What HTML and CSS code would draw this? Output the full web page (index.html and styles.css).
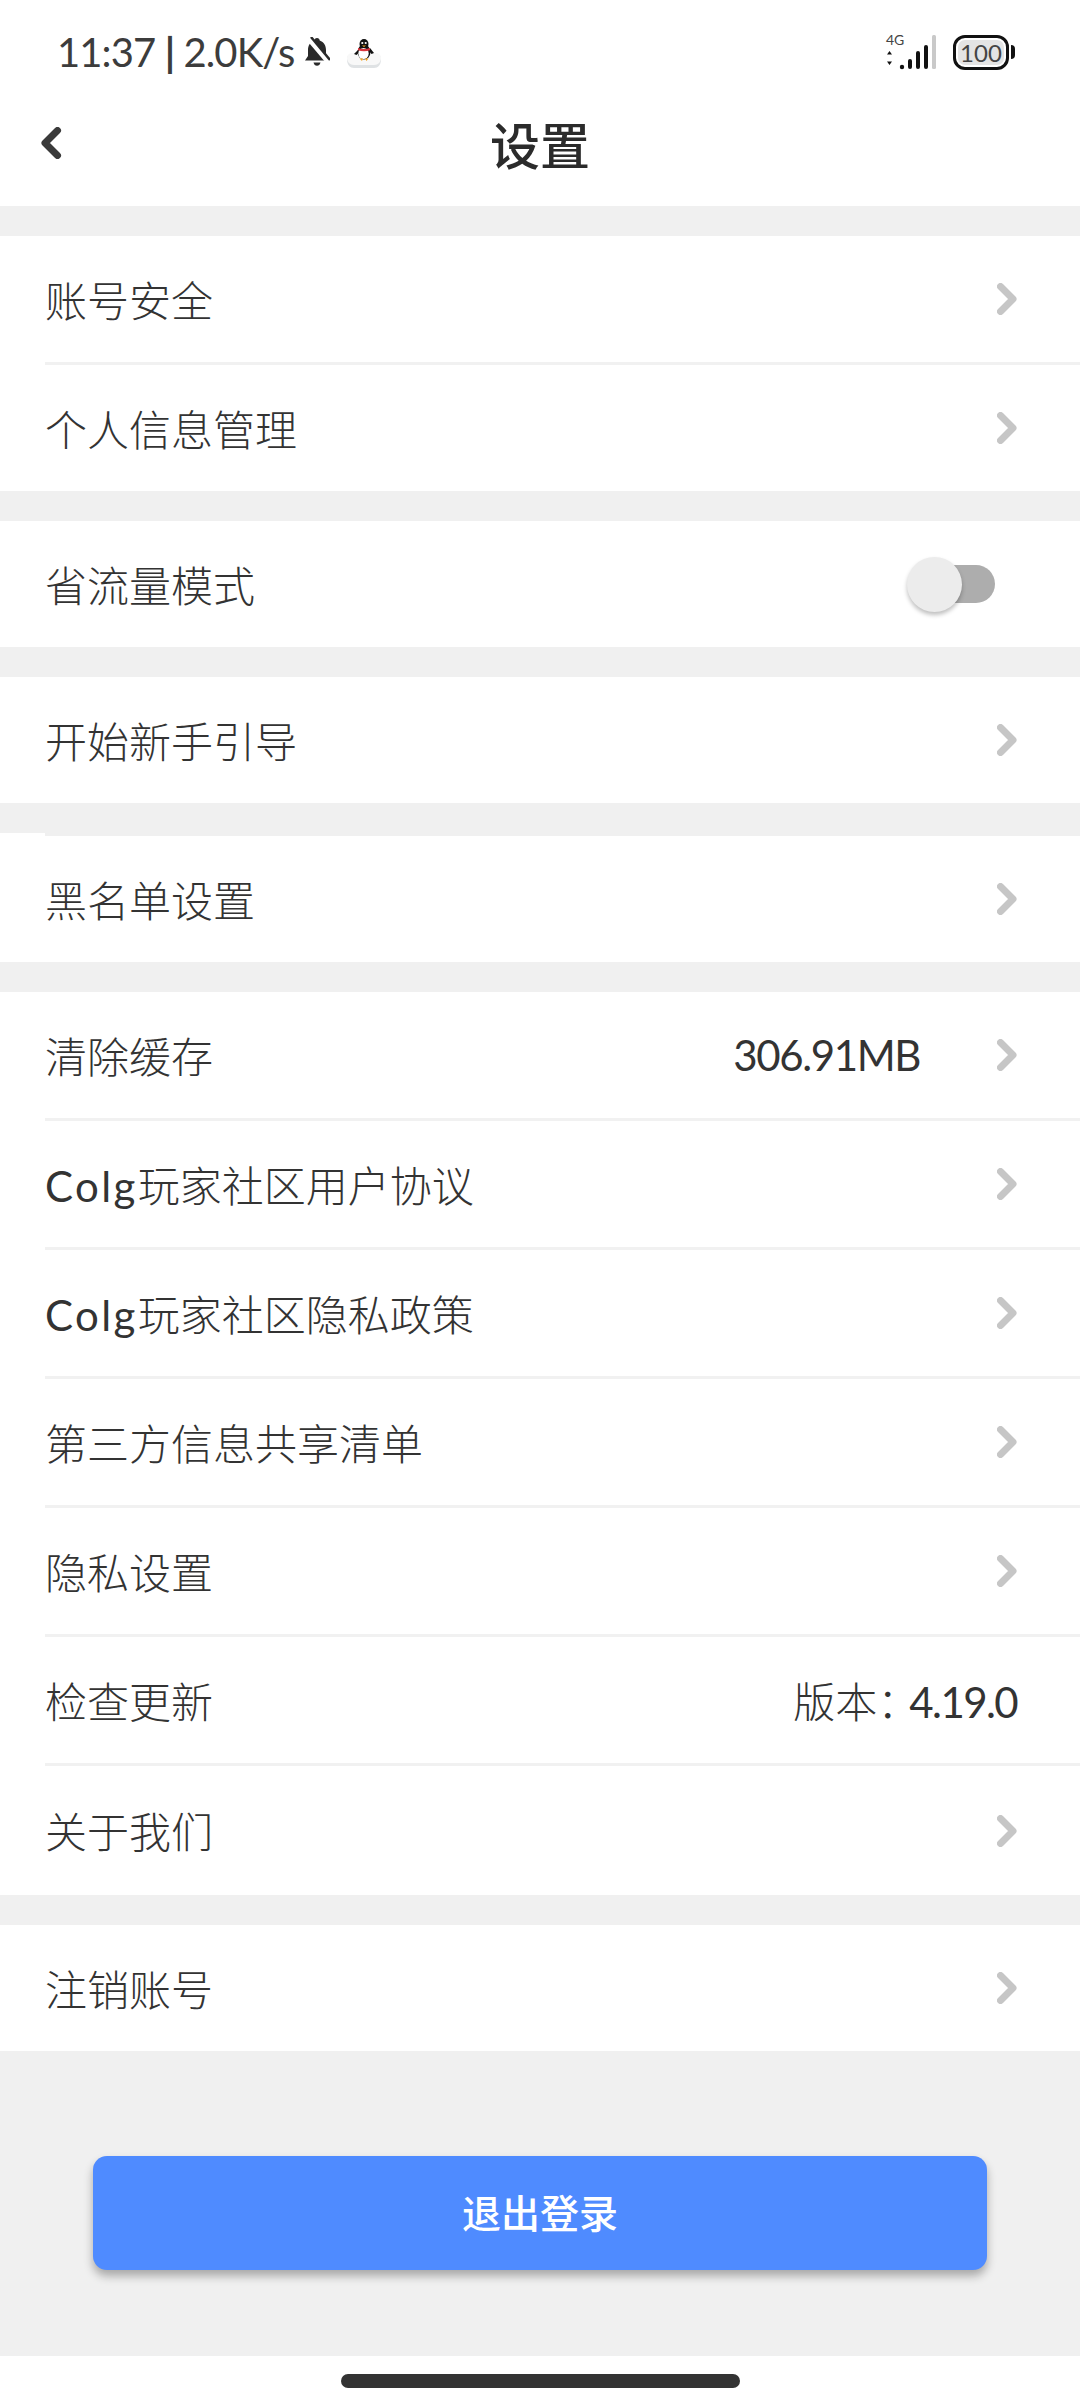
FILE: index.html
```html
<!DOCTYPE html>
<html lang="zh-CN">
<head>
  <meta charset="UTF-8" />
  <meta name="viewport" content="width=device-width, initial-scale=1.0"/>
  <title>设置</title>
  <link rel="stylesheet" href="styles.css">
</head>
<body>
  <svg class="defs" width="0" height="0">
    <symbol id="chevron" viewBox="0 0 20 32">
      <path d="M3.5 3.5 L16 16 L3.5 28.5" fill="none" stroke="#c6c6c6" stroke-width="7" stroke-linecap="round" stroke-linejoin="round"/>
    </symbol>
  </svg>

  <header class="header">
    <div class="status">
      <div class="status-left">
        <span class="status-text">11:37 <b class="status-pipe">|</b> 2.0K/s</span>
        <svg class="bell" viewBox="0 0 26 30">
          <path d="M13 1c1.600 0 2.600 1 2.700 2.400C20 4.800 22 8.500 22 13v6l3 4.500H1L4 19v-6c0-4.500 2-8.200 6.300-9.600C10.400 2 11.400 1 13 1z" fill="#2a2a2a"/>
          <path d="M9.500 25.500h7c-.4 2-1.800 3.300-3.500 3.300s-3.100-1.300-3.500-3.300z" fill="#2a2a2a"/>
          <path d="M4 1 L26 27" stroke="#fff" stroke-width="5"/>
          <path d="M7 0 L26 23" stroke="#2a2a2a" stroke-width="2.500"/>
        </svg>
        <svg class="qq" viewBox="0 0 34 30">
          <path d="M0 20c0-3 2-5 6-5h22c4 0 6 2 6 5 0 6-3 9-7 9H7c-4 0-7-3-7-9z" fill="#dfe2e4"/>
          <path d="M0 19c0-3 2-5 6-5h22c4 0 6 2 6 5 0 4-3 7-7 7H7c-4 0-7-3-7-7z" fill="#f8f8f8"/>
          <path d="M11 11 L7 15 L9.500 16 L12 13.500z" fill="#111"/>
          <path d="M23 9 L27 14 L24.500 15 L22 12z" fill="#111"/>
          <ellipse cx="17" cy="5" rx="4.500" ry="5" fill="#111"/>
          <ellipse cx="17" cy="13" rx="6.500" ry="7.500" fill="#111"/>
          <ellipse cx="16.500" cy="14.500" rx="5.200" ry="5.500" fill="#fff"/>
          <circle cx="15.300" cy="4" r="1.100" fill="#fff"/>
          <circle cx="18.700" cy="4" r="1.100" fill="#fff"/>
          <path d="M15 6.500h4l-2 1.600z" fill="#f5a623"/>
          <path d="M11 9c3.500 1.400 8.500 1.400 12 0v2.300c-3.500 1.400-8.500 1.400-12 0z" fill="#d9363e"/>
          <path d="M12.500 19.500h3.500l-1 2.500z M18 19.500h3.500l-2 2.500z" fill="#f5a623"/>
        </svg>
      </div>
      <div class="status-right">
        <svg class="signal" viewBox="0 0 52 36">
          <text class="signal-label" x="0" y="11">4G</text>
          <path d="M3.500 17 L6 20.500 H1 Z M1 27.500 H6 L3.500 31 Z" fill="#111"/>
          <circle cx="16" cy="33" r="2.200" fill="#111"/>
          <rect x="22" y="25" width="4" height="10" rx="2" fill="#111"/>
          <rect x="30" y="17" width="4" height="18" rx="2" fill="#111"/>
          <rect x="38" y="11" width="4" height="24" rx="2" fill="#111"/>
          <rect x="46" y="1" width="4" height="34" rx="1.500" fill="#c9c9c9"/>
        </svg>
        <div class="battery">
          <div class="battery-body"><span class="battery-level">100</span></div>
          <div class="battery-cap"></div>
        </div>
      </div>
    </div>
    <div class="nav">
      <svg class="back" viewBox="0 0 22 32">
        <path d="M17.500 3.500 L5 16 L17.500 28.500" fill="none" stroke="#3a3a3a" stroke-width="7" stroke-linecap="round" stroke-linejoin="round"/>
      </svg>
      <h1 class="title">设置</h1>
    </div>
  </header>

  <section class="group">
    <div class="row"><div class="row-body line">
      <span class="row-label">账号安全</span>
      <svg class="chevron"><use href="#chevron"/></svg>
    </div></div>
    <div class="row"><div class="row-body">
      <span class="row-label">个人信息管理</span>
      <svg class="chevron"><use href="#chevron"/></svg>
    </div></div>
  </section>

  <section class="group">
    <div class="row"><div class="row-body">
      <span class="row-label">省流量模式</span>
      <div class="toggle"><div class="toggle-thumb"></div></div>
    </div></div>
  </section>

  <section class="group">
    <div class="row"><div class="row-body">
      <span class="row-label">开始新手引导</span>
      <svg class="chevron"><use href="#chevron"/></svg>
    </div></div>
  </section>

  <section class="group group-notched">
    <div class="row"><div class="row-body">
      <span class="row-label">黑名单设置</span>
      <svg class="chevron"><use href="#chevron"/></svg>
    </div></div>
  </section>

  <section class="group">
    <div class="row"><div class="row-body line">
      <span class="row-label">清除缓存</span>
      <span class="row-value">306.91MB</span>
      <svg class="chevron"><use href="#chevron"/></svg>
    </div></div>
    <div class="row"><div class="row-body line">
      <span class="row-label"><span class="latin">Colg</span>玩家社区用户协议</span>
      <svg class="chevron"><use href="#chevron"/></svg>
    </div></div>
    <div class="row"><div class="row-body line">
      <span class="row-label"><span class="latin">Colg</span>玩家社区隐私政策</span>
      <svg class="chevron"><use href="#chevron"/></svg>
    </div></div>
    <div class="row"><div class="row-body line">
      <span class="row-label">第三方信息共享清单</span>
      <svg class="chevron"><use href="#chevron"/></svg>
    </div></div>
    <div class="row"><div class="row-body line">
      <span class="row-label">隐私设置</span>
      <svg class="chevron"><use href="#chevron"/></svg>
    </div></div>
    <div class="row"><div class="row-body line">
      <span class="row-label">检查更新</span>
      <span class="row-version">版本<span class="version-colon">：</span><span class="version-num">4.19.0</span></span>
    </div></div>
    <div class="row"><div class="row-body row-tall">
      <span class="row-label">关于我们</span>
      <svg class="chevron"><use href="#chevron"/></svg>
    </div></div>
  </section>

  <section class="group">
    <div class="row"><div class="row-body">
      <span class="row-label">注销账号</span>
      <svg class="chevron"><use href="#chevron"/></svg>
    </div></div>
  </section>

  <div class="logout-area">
    <button class="logout">退出登录</button>
  </div>

  <footer class="home-area">
    <div class="home-bar"></div>
  </footer>
</body>
</html>
```

FILE: styles.css
```css
* {
  box-sizing: border-box;
}

body {
  margin: 0;
  width: 1080px;
  height: 2400px;
  background: #f0f0f0;
  color: #333;
  font-family: "Lato", "Noto Sans CJK SC", sans-serif;
  display: flex;
  flex-direction: column;
  overflow: hidden;
}

.defs {
  position: absolute;
}

.header {
  height: 206px;
  background: #fff;
  padding-top: 8px;
}

.status {
  height: 88px;
  padding: 0 65px 0 57px;
  display: flex;
  align-items: center;
  justify-content: space-between;
}

.status-left {
  display: flex;
  align-items: center;
}

.status-text {
  font-size: 40px;
  letter-spacing: -0.9px;
  color: #3c3c3c;
  white-space: nowrap;
}

.status-pipe {
  font-weight: 700;
}

.bell {
  width: 26px;
  height: 30px;
  margin-left: 10px;
}

.qq {
  width: 34px;
  height: 30px;
  margin-left: 17px;
  margin-top: 3px;
}

.status-right {
  display: flex;
  align-items: center;
}

.signal {
  width: 52px;
  height: 36px;
  overflow: visible;
}

.signal-label {
  font-size: 14px;
  fill: #444;
}

.battery {
  display: flex;
  align-items: center;
  margin-left: 15px;
}

.battery-body {
  width: 56px;
  height: 35px;
  border: 3px solid #111;
  border-radius: 12px;
  padding: 2px;
}

.battery-level {
  display: block;
  height: 100%;
  background: #e4e4e4;
  border-radius: 7px;
  font-size: 24px;
  line-height: 25px;
  text-align: center;
  color: #444;
}

.battery-cap {
  width: 4px;
  height: 14px;
  margin-left: 2px;
  background: #111;
  border-radius: 0 4px 4px 0;
}

.nav {
  height: 96px;
  padding-left: 40px;
  padding-bottom: 2px;
  display: flex;
  align-items: center;
  position: relative;
}

.back {
  width: 22px;
  height: 32px;
}

.title {
  position: absolute;
  left: 0;
  right: 0;
  margin: 0;
  text-align: center;
  font-size: 50px;
  font-weight: 500;
  color: #2b2b2b;
}

.group {
  margin-top: 30px;
  background: #fff;
}

.group-notched {
  margin-top: 33px;
  position: relative;
}

.group-notched::before {
  content: "";
  position: absolute;
  left: 0;
  top: -3px;
  width: 45px;
  height: 3px;
  background: #fff;
}

.row {
  padding-left: 45px;
}

.row-body {
  height: 126px;
  padding-right: 63px;
  display: flex;
  align-items: center;
  font-size: 42px;
  font-weight: 300;
}

.row-body.line {
  height: 129px;
  border-bottom: 3px solid #f1f1f1;
}

.row-body.row-tall {
  height: 129px;
}

.row-label {
  flex: 1;
  white-space: nowrap;
  margin-top: -2px;
}

.latin {
  font-weight: 400;
  letter-spacing: 2.4px;
}

.row-value {
  margin-right: 77px;
  font-weight: 400;
  letter-spacing: -1.4px;
}

.row-version {
  margin-top: -2px;
}

.version-colon {
  font-family: "Noto Sans CJK TC", sans-serif;
  letter-spacing: -10px;
}

.version-num {
  font-weight: 400;
  letter-spacing: -1.6px;
}

.chevron {
  width: 20px;
  height: 32px;
}

.toggle {
  position: relative;
  width: 74px;
  height: 38px;
  margin-right: 22px;
  background: #adadad;
  border-radius: 19px;
}

.toggle-thumb {
  position: absolute;
  left: -14px;
  top: -8px;
  width: 55px;
  height: 55px;
  background: #ececec;
  border-radius: 50%;
  box-shadow: 0 3px 4px rgba(0, 0, 0, 0.25);
}

.logout-area {
  height: 305px;
  padding: 105px 93px 0;
}

.logout {
  display: block;
  width: 100%;
  height: 114px;
  padding: 0 0 4px;
  border: none;
  border-radius: 14px;
  background: #4f8bff;
  color: #fff;
  font-family: inherit;
  font-size: 39px;
  font-weight: 500;
  box-shadow: 0 6px 10px rgba(0, 0, 0, 0.3);
}

.home-area {
  flex: 1;
  background: #fff;
  padding-top: 18px;
}

.home-bar {
  width: 399px;
  height: 14px;
  margin: 0 auto;
  background: #333;
  border-radius: 7px;
}
```
